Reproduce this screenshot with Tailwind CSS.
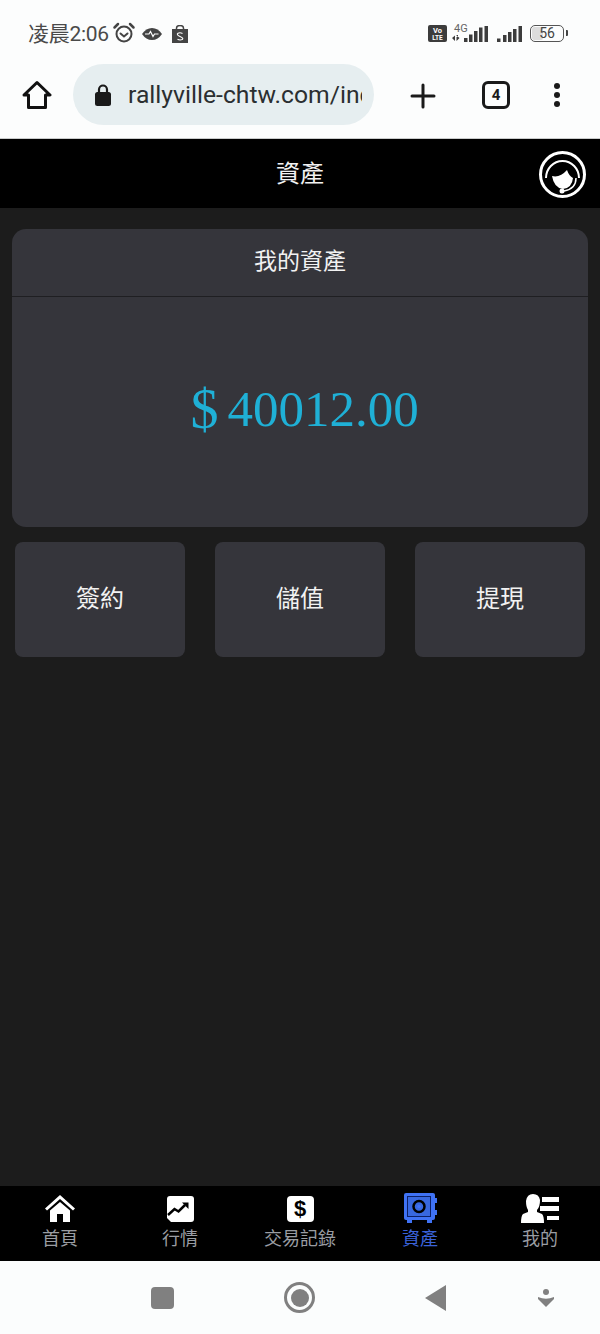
<!DOCTYPE html>
<html lang="zh-Hant">
<head>
    <meta charset="UTF-8">
    <meta name="viewport" content="width=device-width, initial-scale=1.0">
    <title>資產</title>
    <script src="https://cdn.jsdelivr.net/npm/@tailwindcss/browser@4"></script>
</head>
<body class="bg-[#1c1c1c] font-['Roboto','Noto_Sans_CJK_TC',sans-serif]">
<div class="w-[600px] h-[1334px] flex flex-col overflow-hidden">

    <!-- Phone status bar -->
    <div class="h-[64px] bg-[#fcfdfd] flex items-center justify-between pl-[28px] pr-[32px] pt-[4px] shrink-0">
        <div class="flex items-center text-[#4a4a4a]">
            <span class="text-[21px] leading-none tracking-[-0.3px]">凌晨2:06</span>
            <svg class="ml-[3px] mb-[2px]" width="24" height="24" viewBox="0 0 24 24" fill="none" stroke="#444" stroke-width="2"><circle cx="12" cy="13" r="7.5"/><path d="M8.500 12.500 12 15.500l3.500-3" stroke-linecap="round"/><path d="M2.500 6.500 6 3M21.500 6.500 18 3" stroke-width="2.500" stroke-linecap="round"/></svg>
            <svg class="ml-[6px] mb-[1px]" width="20" height="12" viewBox="0 0 20 12"><path d="M0 6Q4 0 10 0T20 6Q16 12 10 12T0 6Z" fill="#444"/><path d="M3 6h4l1.500-2.500 2.500 5 1.500-2.500h4" fill="none" stroke="#fff" stroke-width="1.200"/></svg>
            <svg class="ml-[10px]" width="16" height="18" viewBox="0 0 16 18"><path d="M0 4h16v14H0Z" fill="#444"/><path d="M4.500 4V3a3.500 2.500 0 0 1 7 0v1" fill="none" stroke="#444" stroke-width="1.500"/><path d="M10.500 8.500Q8 7 6 8.300t2 3.200 2.200 3Q8 15.500 5.500 14.200" fill="none" stroke="#fff" stroke-width="1.100"/></svg>
        </div>
        <div class="flex items-center mb-[2px]">
            <svg width="19" height="17" viewBox="0 0 19 17"><rect width="19" height="17" rx="2" fill="#3c3c3c"/><text x="9.500" y="7.500" font-size="7.500" font-weight="700" fill="#fff" text-anchor="middle" font-family="Roboto">Vo</text><text x="9.500" y="14.500" font-size="6.500" font-weight="700" fill="#fff" text-anchor="middle" font-family="Roboto">LTE</text></svg>
            <div class="relative ml-[5px] w-[38px] h-[17px]">
                <span class="absolute left-[2px] top-[-2px] text-[11px] leading-none text-[#666]">4G</span>
                <svg class="absolute left-0 top-0" width="38" height="17" viewBox="0 0 38 17" fill="#3c3c3c"><path d="M0 13 3 10.500V16ZM4.500 10.500v5.500L7.500 13ZM4.500 10h1.500v2H4.500ZM2 14h1v2H2Z"/><path d="M12 13h3.500v4H12ZM17 9.500h3.500V17H17ZM22 6h3.500v11H22ZM27 2.500h3.500V17H27ZM32.500 1H36v16h-3.500Z"/></svg>
            </div>
            <svg class="ml-[7px]" width="25" height="17" viewBox="0 0 25 17" fill="#3c3c3c"><path d="M0 13.500h3.500V17H0ZM6 10h3.500v7H6ZM11 7h3.500v10H11ZM16 4h3.500v13H16ZM21.500 1H25v16h-3.500Z"/></svg>
            <div class="ml-[8px] relative w-[34px] h-[17px] border-[1.5px] border-[#555] rounded-[5px] flex items-center justify-center text-[14px] leading-none text-[#444]">
                <div class="absolute left-[1px] top-[1px] bottom-[1px] w-[11px] bg-[#dcdcdc] rounded-[2px]"></div>
                <span class="relative">56</span>
            </div>
            <div class="ml-[2px] w-[2px] h-[6px] bg-[#444] rounded-r-[1px]"></div>
        </div>
    </div>

    <!-- Browser toolbar -->
    <div class="h-[75px] bg-[#fcfdfd] border-b border-[#c9cbcb] flex items-start shrink-0">
        <svg class="ml-[22px] mt-[16px] shrink-0" width="30" height="30" viewBox="0 0 30 30" fill="none" stroke="#111" stroke-width="3" stroke-linejoin="round"><path d="M2 15 15 2.500 28 15h-4.500v12.500h-17V15Z"/></svg>
        <div class="ml-[21px] w-[301px] h-[61px] rounded-full bg-[#e6eef0] flex items-center pl-[21px] pr-[12px] shrink-0 overflow-hidden">
            <svg class="shrink-0" width="18" height="24" viewBox="0 0 18 24"><path d="M5 10V6.500a4 4 0 0 1 8 0V10" fill="none" stroke="#1a1a1a" stroke-width="2.200"/><rect x="1" y="9" width="16" height="14" rx="2.500" fill="#1a1a1a"/></svg>
            <span class="ml-[16px] pt-[3px] pb-[1px] text-[24.7px] leading-none text-[#2b2f31] whitespace-nowrap overflow-hidden">rallyville-chtw.com/index</span>
        </div>
        <svg class="ml-[36px] mt-[19px] shrink-0" width="26" height="26" viewBox="0 0 26 26" stroke="#1a1a1a" stroke-width="3" stroke-linecap="round"><path d="M13 2v22M2 13h22"/></svg>
        <div class="ml-[46px] mt-[17px] w-[28px] h-[28px] border-[3px] border-[#1a1a1a] rounded-[6px] flex items-center justify-center text-[15px] font-bold leading-none text-[#1a1a1a] shrink-0">4</div>
        <div class="ml-[44px] mt-[19px] flex flex-col gap-[3px] shrink-0">
            <div class="w-[6px] h-[6px] rounded-full bg-[#1a1a1a]"></div>
            <div class="w-[6px] h-[6px] rounded-full bg-[#1a1a1a]"></div>
            <div class="w-[6px] h-[6px] rounded-full bg-[#1a1a1a]"></div>
        </div>
    </div>

    <!-- Page header -->
    <div class="relative h-[69px] bg-black flex items-center justify-center shrink-0">
        <span class="text-[24px] leading-none text-[#f2f2f2]">資產</span>
        <svg class="absolute right-[14px] top-[12px]" width="47" height="47" viewBox="0 0 47 47">
            <circle cx="23.500" cy="23.500" r="22" fill="#000" stroke="#fff" stroke-width="3"/>
            <path d="M7 27A16.500 17 0 0 1 40 27" fill="none" stroke="#fff" stroke-width="2"/>
            <path d="M13 25Q21 27 28 19Q30 25 34 27Q33 37 24 38Q15 37 13 25Z" fill="#fff"/>
            <path d="M37 27Q37 38 25 40" fill="none" stroke="#fff" stroke-width="1.500"/>
            <circle cx="23" cy="40" r="2.500" fill="#fff"/>
        </svg>
    </div>

    <!-- Content -->
    <div class="flex-1 pt-[21px]">
        <div class="mx-[12px] h-[298px] rounded-[14px] bg-[#35353b] flex flex-col">
            <div class="h-[68px] border-b border-[#1f1f22] flex items-center justify-center pb-[2px] text-[23px] leading-none text-[#f2f2f2] shrink-0">我的資產</div>
            <div class="flex-1 flex items-center justify-center pb-[6px] pl-[9px] text-[#1fb0d6] font-['Liberation_Serif','Noto_Sans_CJK_TC',serif] text-[51px] leading-none">
                <span class="text-[56px] leading-none">$</span><span class="ml-[9px]">40012.00</span>
            </div>
        </div>
        <div class="mx-[15px] mt-[15px] grid grid-cols-3 gap-[30px]">
            <div class="h-[115px] rounded-[8px] bg-[#35353b] flex items-center justify-center pb-[2px] text-[24px] leading-none text-[#f2f2f2]">簽約</div>
            <div class="h-[115px] rounded-[8px] bg-[#35353b] flex items-center justify-center pb-[2px] text-[24px] leading-none text-[#f2f2f2]">儲值</div>
            <div class="h-[115px] rounded-[8px] bg-[#35353b] flex items-center justify-center pb-[2px] text-[24px] leading-none text-[#f2f2f2]">提現</div>
        </div>
    </div>

    <!-- Bottom tabs -->
    <div class="h-[75px] bg-black grid grid-cols-5 shrink-0 text-[18px] leading-none text-[#9a9da3]">
        <div class="flex flex-col items-center pt-[9px]">
            <svg width="30" height="28" viewBox="0 0 30 28" fill="#fff"><path d="M0 13.500 15 0l15 13.500-2 2L15 4 2 15.500Z"/><path d="M5 15.500 15 7l10 8.500V27h-7v-8h-6v8H5Z"/></svg>
            <span class="mt-[7px]">首頁</span>
        </div>
        <div class="flex flex-col items-center pt-[10px]">
            <svg width="27" height="26" viewBox="0 0 27 26"><path d="M3 0h21a3 3 0 0 1 3 3v20a3 3 0 0 1-3 3H4l-4-4V3a3 3 0 0 1 3-3Z" fill="#fff"/><path d="M1 19 7.500 13l4 2.500L18 9" fill="none" stroke="#000" stroke-width="2.500"/><path d="M15 6.500h6.500V13Z" fill="#000"/></svg>
            <span class="mt-[8px]">行情</span>
        </div>
        <div class="flex flex-col items-center pt-[10px]">
            <div class="w-[27px] h-[26px] rounded-[4px] bg-white flex items-center justify-center font-['Liberation_Sans',sans-serif] text-[22px] font-bold leading-none text-black">$</div>
            <span class="mt-[8px] whitespace-nowrap">交易記錄</span>
        </div>
        <div class="flex flex-col items-center pt-[7px] text-[#3a62d8]">
            <svg width="33" height="31" viewBox="0 0 33 31"><rect x="0" y="0" width="31" height="27" rx="2" fill="#3f72f5"/><rect x="3.500" y="3.500" width="23" height="20" fill="#3868e0" stroke="#0b1f66" stroke-width="1"/><circle cx="15" cy="13.500" r="5.500" fill="none" stroke="#000" stroke-width="2.500"/><circle cx="15" cy="13.500" r="1.800" fill="#3f72f5"/><path d="M31 5h2v5h-2ZM31 17h2v5h-2Z" fill="#3f72f5"/><path d="M3 27h5v3H3ZM23 27h5v3h-5Z" fill="#3f72f5"/></svg>
            <span class="mt-[6px]">資產</span>
        </div>
        <div class="flex flex-col items-center pt-[8px]">
            <svg width="38" height="30" viewBox="0 0 38 30" fill="#fff"><path d="M12 0q6 0 7 6 0 7-3 10v2l5 2q2 2 2 9H0q0-7 2-9l5-2v-2Q5 13 5 7q1-7 7-7Z"/><path d="M21 3h17v5H21ZM19 12h19v5H19ZM26 22h12v4H26Z"/></svg>
            <span class="mt-[6px]">我的</span>
        </div>
    </div>

    <!-- Android nav bar -->
    <div class="h-[73px] bg-[#fbfdfd] flex items-start shrink-0">
        <div class="ml-[151px] mt-[26px] w-[23px] h-[22px] rounded-[4px] bg-[#808080]"></div>
        <div class="ml-[110px] mt-[21px] w-[31px] h-[31px] rounded-full border-[3px] border-[#808080] flex items-center justify-center">
            <div class="w-[18px] h-[18px] rounded-full bg-[#808080]"></div>
        </div>
        <svg class="ml-[110px] mt-[24px]" width="22" height="26" viewBox="0 0 22 26" fill="#808080"><path d="M21 0v26L0 13Z"/></svg>
        <svg class="ml-[91px] mt-[28px]" width="16" height="19" viewBox="0 0 16 19" fill="#808080"><circle cx="8" cy="3" r="3"/><path d="M0 8q8 3.500 16 0v2l-8 8-8-8Z"/></svg>
    </div>
</div>
</body>
</html>
